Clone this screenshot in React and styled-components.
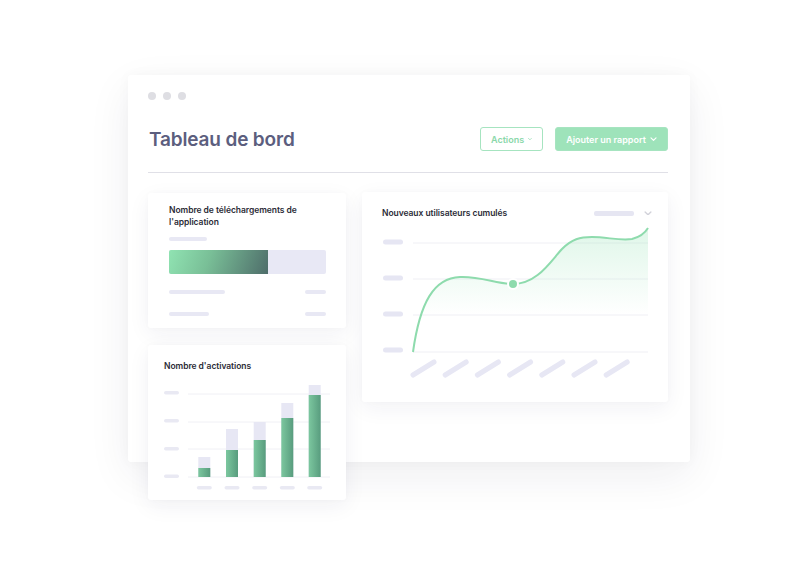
import React from 'react';
import styled, { createGlobalStyle } from 'styled-components';

const GlobalStyle = createGlobalStyle`
  html, body {
    margin: 0;
    padding: 0;
    background: #ffffff;
  }
  body {
    font-family: 'Inter', 'Noto Sans', sans-serif;
    -webkit-font-smoothing: antialiased;
  }
`;

const Page = styled.div`
  width: 795px;
  height: 580px;
  padding: 75px 0 0 128px;
  box-sizing: border-box;
  overflow: hidden;
`;

const Window = styled.div`
  width: 562px;
  height: 387px;
  box-sizing: border-box;
  padding: 17px 22px 0 20px;
  background: #ffffff;
  border-radius: 3px;
  box-shadow: 0 14px 44px rgba(30, 30, 60, 0.07), 0 0 14px rgba(30, 30, 60, 0.03);
  display: flex;
  flex-direction: column;

  & > * {
    flex-shrink: 0;
  }
`;

const Dots = styled.div`
  display: flex;
  gap: 7px;
`;

const Dot = styled.span`
  width: 8px;
  height: 8px;
  border-radius: 50%;
  background: #dedee3;
`;

const Header = styled.div`
  display: flex;
  align-items: center;
  justify-content: space-between;
  margin-top: 27px;
  height: 24px;
`;

const Title = styled.h1`
  margin: 0 0 0 1px;
  font-size: 19px;
  font-weight: 600;
  letter-spacing: -0.15px;
  color: #5c5e7e;
`;

const Actions = styled.div`
  display: flex;
  gap: 12px;
`;

const Button = styled.button`
  height: 24px;
  padding: 0 10px;
  display: flex;
  align-items: center;
  justify-content: center;
  gap: 4px;
  border-radius: 3px;
  font-family: inherit;
  font-size: 9px;
  font-weight: 600;
  border: 1px solid #a6e4c0;
  background: ${p => (p.$filled ? '#9ee3ba' : '#ffffff')};
  color: ${p => (p.$filled ? '#ffffff' : '#8ad8aa')};
  box-sizing: border-box;
  width: ${p => p.$w}px;
`;

const Divider = styled.div`
  height: 1px;
  background: #e0e0e7;
  margin-top: 21px;
`;

const Body = styled.div`
  display: grid;
  grid-template-columns: 198px 306px;
  gap: 16px;
  margin-top: 19px;
  align-items: start;
`;

const Column = styled.div`
  display: flex;
  flex-direction: column;
  gap: 17px;
  margin-top: 1px;
`;

const Card = styled.div`
  background: #ffffff;
  border-radius: 3px;
  box-shadow: 0 6px 22px rgba(40, 40, 90, 0.06), 0 0 6px rgba(40, 40, 90, 0.02);
  box-sizing: border-box;
  height: ${p => p.$h}px;
  padding: ${p => p.$pad};
`;

const CardTitle = styled.div`
  font-size: 8.5px;
  font-weight: 600;
  line-height: 12px;
  color: #2b2b36;
  letter-spacing: -0.05px;
`;

const Skeleton = styled.div`
  width: ${p => p.$w}px;
  height: 4px;
  border-radius: 2px;
  background: #e8e8f4;
`;

const SkeletonRow = styled.div`
  display: flex;
  justify-content: space-between;
  margin-top: ${p => p.$mt}px;
`;

const Track = styled.div`
  margin-top: 9px;
  height: 24px;
  border-radius: 2px;
  background: #e8e8f5;
  overflow: hidden;
  display: flex;
`;

const Fill = styled.div`
  height: 100%;
  background: linear-gradient(110deg, #90e3b2 0%, #79bf97 40%, #4e6d6a 100%);
`;

const TitleRow = styled.div`
  display: flex;
  align-items: center;
  justify-content: space-between;
`;

const Picker = styled.div`
  display: flex;
  align-items: center;
  gap: 10px;
  margin-right: 2px;
`;

const Chevron = ({ color = '#8ad8aa', size = 7 }) => (
  <svg width={size} height={size * 0.6} viewBox="0 0 8 5" fill="none">
    <polyline points="1,1 4,4 7,1" stroke={color} strokeWidth="1.4" strokeLinecap="round" strokeLinejoin="round" />
  </svg>
);

const LineChart = () => {
  const curve =
    'M31,130 C38,80 52,56 78,55 C98,54 115,62 131,62 C155,62 168,40 180,27 C190,17 198,15 210,15 C225,15 238,19 250,17 C258,15 263,11 266,6';
  return (
    <svg width="272" height="160" viewBox="0 0 272 160" style={{ display: 'block', marginTop: 3 }}>
      <defs>
        <linearGradient id="area" x1="0" y1="0" x2="0" y2="1">
          <stop offset="0%" stopColor="#a4e6bf" stopOpacity="0.35" />
          <stop offset="70%" stopColor="#a4e6bf" stopOpacity="0" />
        </linearGradient>
      </defs>
      {[20, 56, 92, 128].map(y => (
        <rect key={y} x="1" y={y - 2.5} width="20" height="5" rx="2.5" fill="#e6e6f3" />
      ))}
      {[21, 57, 93, 130].map(y => (
        <line key={y} x1="31" x2="266" y1={y} y2={y} stroke="#efeff4" strokeWidth="1" />
      ))}
      <path d={`${curve} L266,130 L31,130 Z`} fill="url(#area)" />
      <path d={curve} fill="none" stroke="#8edbad" strokeWidth="2" />
      <circle cx="131" cy="62" r="5" fill="#8edbad" stroke="#ffffff" strokeWidth="2" />
      {[0, 1, 2, 3, 4, 5, 6].map(i => {
        const x = 31 + i * 32.2;
        return (
          <line key={i} x1={x} y1="153" x2={x + 21} y2="140" stroke="#e7e7f4" strokeWidth="5" strokeLinecap="round" />
        );
      })}
    </svg>
  );
};

const bars = [
  { x: 34.3, grey: 78, green: 89 },
  { x: 62, grey: 50, green: 71 },
  { x: 89.7, grey: 43, green: 61 },
  { x: 117.3, grey: 24, green: 39 },
  { x: 144.7, grey: 6, green: 16 }
];

const BarChart = () => (
  <svg width="170" height="116" viewBox="0 0 170 116" style={{ display: 'block', marginTop: 7 }}>
    <defs>
      <linearGradient id="bar" x1="0" y1="0" x2="1" y2="0">
        <stop offset="0%" stopColor="#7cc79f" />
        <stop offset="100%" stopColor="#589c7e" />
      </linearGradient>
    </defs>
    {[12, 40, 68, 95.5].map(y => (
      <rect key={y} x="0" y={y} width="15" height="3.5" rx="1.75" fill="#e9e9f3" />
    ))}
    {[15, 43, 70, 98].map(y => (
      <line key={y} x1="24" x2="166" y1={y} y2={y} stroke="#f0f0f5" strokeWidth="1" />
    ))}
    {bars.map(b => (
      <g key={b.x}>
        <rect x={b.x} y={b.grey} width="12" height={98 - b.grey} fill="#e7e7f4" />
        <rect x={b.x} y={b.green} width="12" height={98 - b.green} fill="url(#bar)" />
        <rect x={b.x - 1.5} y="107" width="15" height="3.5" rx="1.75" fill="#e9e9f3" />
      </g>
    ))}
  </svg>
);

const App = () => {
  const progress = 99 / 157;
  return (
    <>
      <GlobalStyle />
      <Page>
        <Window>
          <Dots>
            <Dot />
            <Dot />
            <Dot />
          </Dots>
          <Header>
            <Title>Tableau de bord</Title>
            <Actions>
              <Button $w={63}>
                Actions <Chevron />
              </Button>
              <Button $filled $w={113}>
                Ajouter un rapport <Chevron color="#ffffff" />
              </Button>
            </Actions>
          </Header>
          <Divider />
          <Body>
            <Column>
              <Card $h={135} $pad="11px 20px 0 21px">
                <CardTitle>
                  Nombre de téléchargements de
                  <br />
                  l'application
                </CardTitle>
                <Skeleton $w={38} style={{ marginTop: 9 }} />
                <Track>
                  <Fill style={{ width: `${progress * 100}%` }} />
                </Track>
                <SkeletonRow $mt={16}>
                  <Skeleton $w={56} />
                  <Skeleton $w={21} />
                </SkeletonRow>
                <SkeletonRow $mt={18}>
                  <Skeleton $w={40} />
                  <Skeleton $w={21} />
                </SkeletonRow>
              </Card>
              <Card $h={155} $pad="15px 12px 0 16px">
                <CardTitle>Nombre d'activations</CardTitle>
                <BarChart />
              </Card>
            </Column>
            <Card $h={210} $pad="15px 14px 0 20px">
              <TitleRow>
                <CardTitle>Nouveaux utilisateurs cumulés</CardTitle>
                <Picker>
                  <Skeleton $w={40} style={{ height: 5, background: '#e6e6f2' }} />
                  <Chevron color="#d2d2da" size={8} />
                </Picker>
              </TitleRow>
              <LineChart />
            </Card>
          </Body>
        </Window>
      </Page>
    </>
  );
};

export default App;
